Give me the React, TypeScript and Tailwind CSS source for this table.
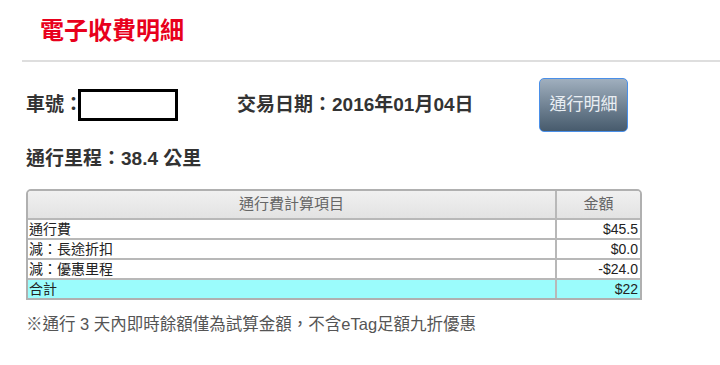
import React from "react";

const rows = [
  { label: "通行費", amount: "$45.5" },
  { label: "減：長途折扣", amount: "$0.0" },
  { label: "減：優惠里程", amount: "-$24.0" },
];

export default function App() {
  return (
    <div
      className="h-[365px] w-[720px] overflow-hidden bg-white text-[#333]"
      style={{ fontFamily: '"Liberation Sans", "Noto Sans CJK TC", sans-serif' }}
    >
      <div className="flex h-[60px] items-center pl-[40px] pt-[2px]">
        <h1 className="text-[24px] font-bold leading-none text-[#e8001c]">電子收費明細</h1>
      </div>
      <div className="ml-[22px] h-[2px] bg-[#dedede]" />

      <div className="px-[26px]">
        <div className="mt-[16px] flex h-[54px] items-center">
          <div className="flex items-center text-[19px] font-bold">
            <span>車號：</span>
            <span className="-ml-[5px] h-[32px] w-[100px] border-[3px] border-black bg-white" />
          </div>
          <div className="ml-[59px] text-[19px] font-bold">交易日期：2016年01月04日</div>
          <button className="ml-auto mr-[66px] h-[54px] w-[89px] rounded-[5px] border border-[#4a8fe8] bg-gradient-to-b from-[#a0afbe] to-[#475b6d] text-[17px] text-[#e9eef3]">
            通行明細
          </button>
        </div>

        <div className="mt-[13px] text-[19px] font-bold">通行里程：38.4 公里</div>

        <div className="mt-[15px] w-[616px] overflow-hidden rounded-t-[5px] border-2 border-[#b0b0b0]">
          <table className="w-full border-collapse">
            <thead>
              <tr className="h-[28px] bg-gradient-to-b from-[#f0f0f0] to-[#e2e2e2] text-[15px] text-[#666]">
                <th className="border-r-2 border-b-2 border-[#b8b8b8] font-normal">通行費計算項目</th>
                <th className="w-[84px] border-b-2 border-[#b8b8b8] font-normal">金額</th>
              </tr>
            </thead>
            <tbody className="text-[14px] text-[#222]">
              {rows.map((r) => (
                <tr key={r.label} className="h-[20px] bg-white">
                  <td className="border-r-2 border-b-2 border-[#b8b8b8] px-[1px] leading-none">{r.label}</td>
                  <td className="border-b-2 border-[#b8b8b8] px-[2px] text-right leading-none">{r.amount}</td>
                </tr>
              ))}
              <tr className="h-[19px] bg-[#9bfcfc]">
                <td className="border-r-2 border-[#b8b8b8] px-[1px] leading-none">合計</td>
                <td className="px-[2px] text-right leading-none">$22</td>
              </tr>
            </tbody>
          </table>
        </div>

        <p className="mt-[12px] text-[16.5px] text-[#555]">※通行 3 天內即時餘額僅為試算金額，不含eTag足額九折優惠</p>
      </div>
    </div>
  );
}
